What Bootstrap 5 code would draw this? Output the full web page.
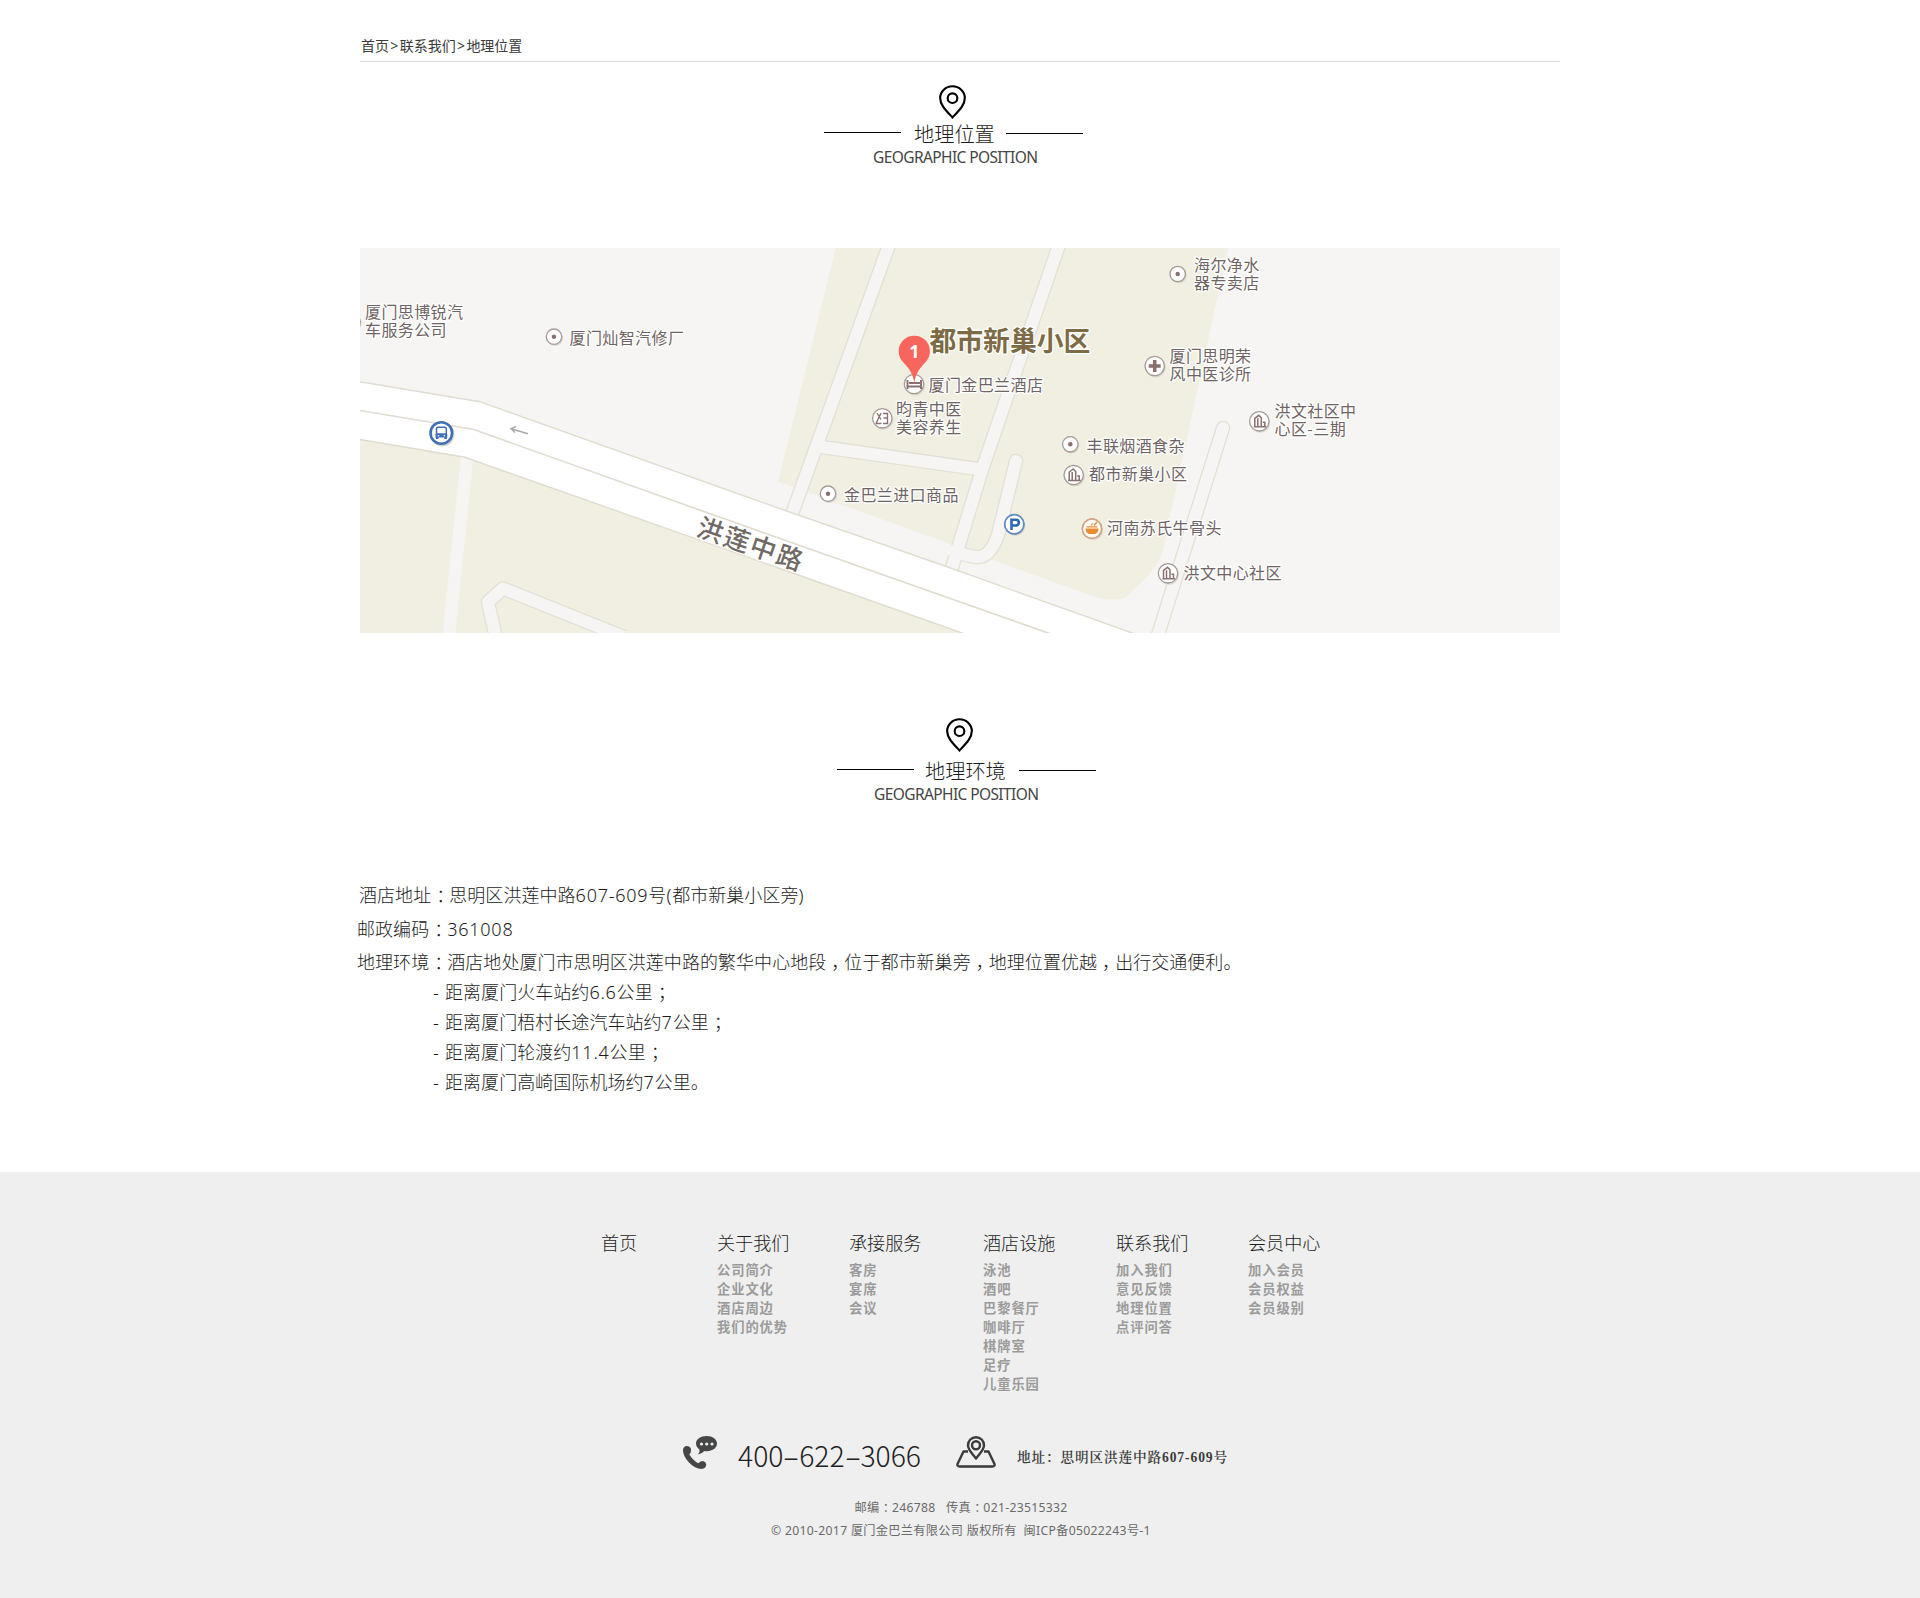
<!DOCTYPE html>
<html lang="zh-CN">
<head>
<meta charset="utf-8">
<meta name="viewport" content="width=device-width, initial-scale=1">
<title>地理位置</title>
<link href="https://cdn.jsdelivr.net/npm/bootstrap@5.3.0/dist/css/bootstrap.min.css" rel="stylesheet">
<style>
body{font-family:"Noto Sans","Noto Sans CJK SC",sans-serif;color:#3a3a3a;background:#fff;font-weight:400}
a{color:inherit;text-decoration:none}
.wrap{width:1200px;margin:0 auto}
.crumbs{height:62px;padding:36px 0 0 1px;font-size:14px;line-height:20px;border-bottom:1px solid #dcdadb}
.crumbs span{display:inline-block;width:10.7px;text-align:center}
.sec-title{width:260px;margin-left:464px}
.sec-title.env{margin-left:477px}
.sec-title .pin{display:block;width:27px;height:34px;margin-left:115px}
.sec-title.env .pin{margin-left:109px}
.sec-title .rule{width:77px;height:1px;background:#000;margin-top:9px}
.sec-title h2+.rule{margin-top:10px}
.sec-title h2{font-size:20.2px;line-height:24px;font-weight:300;color:#1c1c1c;margin:-1px 0 0;width:105px;padding-left:13px}
.sec-title.env h2{padding-left:11px}
.sec-title p{font-size:15.5px;line-height:20px;margin:0 0 0 49px;white-space:nowrap;letter-spacing:-.6px;color:#444}
.sec-title.env p{margin-left:37px}
.map{display:block;margin-top:81px}
.info{font-size:18px;font-weight:300;color:#1c1c1c;letter-spacing:.05px;padding-top:75px}
.info p{margin:0 0 0 -3px;line-height:33.5px;white-space:nowrap}
.info p:first-child{margin-left:-1px}
.info ul{padding-left:73px;margin-top:-3px}
.info li{line-height:30px}
.info .lt{letter-spacing:.75px}
.pu{font-family:"Noto Sans CJK SC";font-feature-settings:"halt";padding:0 .22em 0 .28em;line-height:1}
footer{background:#efefef;height:426px;margin-top:75.5px}
.cols{display:grid;grid-template-columns:116px 132px 134px 133px 132px 100px;margin-left:241px;height:205px;padding-top:58px}
.cols h3{font-size:18.1px;line-height:27px;font-weight:300;color:#1c1c1c;margin:0 0 4px;white-space:nowrap}
.cols li{font-size:13.3px;letter-spacing:.9px;line-height:19px;font-weight:600;color:#9b9b9b;white-space:nowrap}
.contact{height:61px;margin-left:323px;margin-top:58px;color:#3b3b3b}
.tel{font:300 28.3px/36px "Noto Sans CJK SC",sans-serif;margin:2px 0 0 21px;width:218px;white-space:nowrap;color:#222}
.tel i{font-style:normal;display:inline-block;width:15.8px;text-align:center;transform:scaleX(1.8)}
.addr{font:600 13.6px/20px "Liberation Serif","Noto Serif CJK SC","Noto Sans CJK SC",serif;letter-spacing:.9px;margin:13px 0 0 21px;white-space:nowrap}
.legal{font-size:12.2px;letter-spacing:.3px;line-height:23px;color:#6a6a6a;white-space:pre;padding-left:2px}
</style>
<script src="https://cdn.jsdelivr.net/npm/bootstrap@5.3.0/dist/js/bootstrap.bundle.min.js"></script>
</head>
<body>
<svg width="0" height="0" class="position-absolute" aria-hidden="true">
<defs>
<symbol id="pin" viewBox="0 0 28 35"><path d="M14 1.2C7 1.200 1.200 6.700 1.200 13.400C1.200 20.500 7 26 14 33.500C21 26 26.800 20.500 26.800 13.400C26.800 6.700 21 1.200 14 1.200Z" fill="none" stroke="#000" stroke-width="2.200"/><circle cx="14" cy="13.500" r="5" fill="none" stroke="#000" stroke-width="2.200"/></symbol>
<g id="disc"><circle cx="1" cy="1.500" r="10" fill="#c9c5bb" opacity=".6"/><circle r="9.700" fill="#fff" stroke="#a59a98" stroke-width="1.300"/></g>
<g id="dot"><circle cx="1" cy="1.300" r="8" fill="#c9c5bb" opacity=".6"/><circle r="7.700" fill="#fff" stroke="#a59a98" stroke-width="1.300"/><circle r="2.200" fill="#8a6f6f"/></g>
<g id="bld"><use href="#disc"/><path d="M-5.500 5.500H7M-4.500 5V-3L-.5-6L2 -3.500V5M-1.500 5V-3M5.500 5V1H3.500" fill="none" stroke="#8a706f" stroke-width="1.500"/></g>
</defs>
</svg>

<main class="wrap">
  <nav class="crumbs"><a href="#">首页</a><span>&gt;</span><a href="#">联系我们</a><span>&gt;</span><a href="#">地理位置</a></nav>

  <section style="padding-top:23px">
    <div class="sec-title">
      <svg class="pin"><use href="#pin"/></svg>
      <div class="d-flex align-items-start mt-1" style="height:20px"><div class="rule"></div><h2>地理位置</h2><div class="rule"></div></div>
      <p class="pt-1">GEOGRAPHIC POSITION</p>
    </div>

    <svg class="map" width="1200" height="385" viewBox="0 0 1200 385" role="img">
      <rect width="1200" height="385" fill="#f6f5f3"/>
      <path d="M475.700 0L418 233.500L450 245.300L590 296L637 313.700L738 350Q755 353 765 350L787 329Q800 315 803 302L868 0ZM0 191L105 209.300L410 317L602 385H0Z" fill="#f1efe2"/>
      <path d="M101 208L113 212L95.300 385H82.700Z" fill="#f6f5f3"/>
      <g fill="none" stroke-linejoin="round">
        <g stroke="#e2e0d4" stroke-width="14.500">
          <path d="M529 -3L432 266"/><path d="M462 199L619 221"/><path d="M699 -3L622 222L590 326"/><path d="M656 213L638 287Q630 309 618 309Q610 309 597 304" stroke-linecap="round"/><path d="M863 180L797 390" stroke-linecap="round"/><path d="M136 390L128 354L143 340.500L264 389"/>
        </g>
        <g stroke="#f6f5f3" stroke-width="12">
          <path d="M529 -3L432 266"/><path d="M458 198.500L621 221.500"/><path d="M699 -3L622 222L590 326"/><path d="M656 213L638 287Q630 309 618 309Q610 309 593 303" stroke-linecap="round"/><path d="M863 180L797 390" stroke-linecap="round"/><path d="M136 390L128 354L143 340.500L264 389"/>
        </g>
      </g>
      <path d="M-3 133.300L120 153.700L410 257.200L585 318L775 386H605L410 317L105 209.300L-3 191Z" fill="#fff" stroke="#dfdccf" stroke-width="1.400"/>
      <path d="M-3 162L113 181.300L410 287L691 386" fill="none" stroke="#dfdccf" stroke-width="1.600"/>
      <path d="M168 185.700L151 180.800M156 178.500L151 180.800L155 184.500" fill="none" stroke="#aaa" stroke-width="1.500"/>

      <use href="#dot" x="-7.500" y="74"/><use href="#dot" x="194" y="88.700"/><use href="#dot" x="817.700" y="26"/><use href="#dot" x="710.300" y="196.300"/><use href="#dot" x="468" y="245.700"/>
      <use href="#bld" x="713.700" y="227"/><use href="#bld" x="808" y="325.300"/><use href="#bld" x="899.300" y="173.300"/>
      <use href="#disc" x="794.700" y="118"/><path d="M794.700 112v12M788.700 118h12" stroke="#8a706f" stroke-width="3.600"/>
      <use href="#disc" x="554" y="136"/><path d="M547.500 132v9M561 132v9M547.500 138.500h13.500M549 135h11" fill="none" stroke="#8a706f" stroke-width="1.900"/>
      <use href="#disc" x="522.300" y="170.300"/><path d="M517 165l4 6.500M521 165l-5 10.500M515.500 175.500h6M523 165.500h4.500v10h-4.500M523.500 170h4" fill="none" stroke="#8a706f" stroke-width="1.400"/>

      <circle cx="82.500" cy="186.500" r="12" fill="#c9c5bb" opacity=".7"/><circle cx="81.300" cy="185" r="10.800" fill="#fff" stroke="#3f70b6" stroke-width="2.600"/>
      <path d="M76.500 180.500q0-1.300 1.500-1.300h6.800q1.500 0 1.500 1.300v5.500h-9.800z" fill="#fff" stroke="#3f70b6" stroke-width="1.500"/><path d="M75.500 186h11.800v3.500H75.500zM76 189h2.500v2H76zM84.300 189h2.500v2h-2.500z" fill="#3f70b6"/><circle cx="78.500" cy="187.700" r=".8" fill="#fff"/><circle cx="84.300" cy="187.700" r=".8" fill="#fff"/>

      <use href="#disc" x="654.300" y="276.300"/><circle cx="654.300" cy="276.300" r="9.600" fill="#fff" stroke="#5c88c4" stroke-width="1.700"/>
      <path d="M651.500 282v-10.300h4.300q3 0 3 2.900t-3 2.900h-4" fill="none" stroke="#2e68b5" stroke-width="2.600"/>
      <use href="#disc" x="732" y="280.700"/><circle cx="732" cy="280.700" r="9.600" fill="#fff" stroke="#d9a27c" stroke-width="1.500"/>
      <path d="M725.500 280.500h13q0 4-3.500 5.500h-6q-3.500-1.500-3.500-5.500zM726.500 278.300h11v1.300h-11z" fill="#ec8a2e"/><path d="M731 277.500l2-2.500M734 277.500l3-3.500" stroke="#ec8a2e" stroke-width="1.200"/>

      <g font-family="Noto Sans CJK SC, sans-serif" font-size="16" font-weight="400" letter-spacing=".4" fill="#6f6463" stroke="#fff" stroke-width="2.500" stroke-linejoin="round" paint-order="stroke">
        <text x="5" y="70.300">厦门思博锐汽</text><text x="5" y="88.300">车服务公司</text>
        <text x="209.500" y="96">厦门灿智汽修厂</text>
        <text x="834" y="23">海尔净水</text><text x="834" y="41">器专卖店</text>
        <text x="809.500" y="114">厦门思明荣</text><text x="809.500" y="132">风中医诊所</text>
        <text x="914.500" y="169">洪文社区中</text><text x="914.500" y="187">心区-三期</text>
        <text x="568.500" y="142.500">厦门金巴兰酒店</text>
        <text x="536" y="166.500">昀青中医</text><text x="536" y="184.500">美容养生</text>
        <text x="726.500" y="203.500">丰联烟酒食杂</text><text x="729" y="232">都市新巢小区</text>
        <text x="484" y="253">金巴兰进口商品</text>
        <text x="747" y="286">河南苏氏牛骨头</text><text x="823.500" y="331">洪文中心社区</text>
        <text x="569.500" y="103" font-size="26.800" letter-spacing="0" font-weight="700" fill="#7d6b45">都市新巢小区</text>
        <text transform="translate(390 296) rotate(19)" x="1" y="9.500" text-anchor="middle" font-size="26" letter-spacing="2" font-weight="500" fill="#706964">洪莲中路</text>
      </g>
      <path d="M554.300 136C553.500 125 548 119.500 543 114A15.600 15.600 0 1 1 565.600 114C560.600 119.500 555.100 125 554.300 136Z" fill="#f7655d"/>
      <text x="554.300" y="109.500" text-anchor="middle" font-family="Noto Sans" font-size="18" font-weight="700" fill="#fff">1</text>
    </svg>
  </section>

  <section style="padding-top:85px">
    <div class="sec-title env">
      <svg class="pin"><use href="#pin"/></svg>
      <div class="d-flex align-items-start mt-2" style="height:20px"><div class="rule"></div><h2>地理环境</h2><div class="rule"></div></div>
      <p class="pt-1">GEOGRAPHIC POSITION</p>
    </div>
    <div class="info">
      <p>酒店地址<span class="pu">：</span>思明区洪莲中路<span class="lt">607-609</span>号<span class="lt">(</span>都市新巢小区旁)</p>
      <p>邮政编码<span class="pu">：</span><span class="lt">361008</span></p>
      <p>地理环境<span class="pu">：</span>酒店地处厦门市思明区洪莲中路的繁华中心地段<span class="pu">，</span>位于都市新巢旁<span class="pu">，</span>地理位置优越<span class="pu">，</span>出行交通便利。</p>
      <ul class="list-unstyled mb-0">
        <li><span class="lt">- </span>距离厦门火车站约<span class="lt">6.6</span>公里<span class="pu">；</span></li>
        <li><span class="lt">- </span>距离厦门梧村长途汽车站约<span class="lt">7</span>公里<span class="pu">；</span></li>
        <li><span class="lt">- </span>距离厦门轮渡约<span class="lt">11.4</span>公里<span class="pu">；</span></li>
        <li><span class="lt">- </span>距离厦门高崎国际机场约<span class="lt">7</span>公里。</li>
      </ul>
    </div>
  </section>
</main>

<footer>
  <div class="wrap">
    <div class="cols">
      <div><h3>首页</h3></div>
      <div><h3>关于我们</h3><ul class="list-unstyled m-0"><li>公司简介</li><li>企业文化</li><li>酒店周边</li><li>我们的优势</li></ul></div>
      <div><h3>承接服务</h3><ul class="list-unstyled m-0"><li>客房</li><li>宴席</li><li>会议</li></ul></div>
      <div><h3>酒店设施</h3><ul class="list-unstyled m-0"><li>泳池</li><li>酒吧</li><li>巴黎餐厅</li><li>咖啡厅</li><li>棋牌室</li><li>足疗</li><li>儿童乐园</li></ul></div>
      <div><h3>联系我们</h3><ul class="list-unstyled m-0"><li>加入我们</li><li>意见反馈</li><li>地理位置</li><li>点评问答</li></ul></div>
      <div><h3>会员中心</h3><ul class="list-unstyled m-0"><li>加入会员</li><li>会员权益</li><li>会员级别</li></ul></div>
    </div>
    <div class="contact d-flex align-items-start">
      <svg width="34" height="34" viewBox="0 0 34 34" fill="#454747"><path d="M23.700 1C17.500 1 13 4.300 13 8.500C13 11 14.300 13 16.500 14.400Q17 17 15 19.500Q19 18.700 21.300 16Q22.500 16.200 23.700 16.200C29.700 16.200 34 12.800 34 8.600S29.700 1 23.700 1Z"/><g fill="#efefef"><circle cx="18.500" cy="9" r="1.600"/><circle cx="23.700" cy="9" r="1.600"/><circle cx="29" cy="9" r="1.600"/></g><path d="M0 15.500C0 12.500 1.500 11 4 11Q8.500 11.500 8 15.500Q8 18 6.300 19.200Q9.500 25 15.300 28.300Q17.500 26 20 26Q23 26.800 23.300 29.500Q23 33.500 18.500 34Q12 34 5.500 27Q0 20.500 0 15.500Z"/></svg>
      <div class="tel">400<i>-</i>622<i>-</i>3066</div>
      <svg style="margin-top:1px" width="40" height="32" viewBox="0 0 40 32" fill="none" stroke="#3b3b3b" stroke-width="2.400" stroke-linejoin="round"><path d="M12 15.500H7.500L1.500 28Q1 30.500 3.500 30.500H36.500Q39 30.500 38.500 28L32.500 15.500H28"/><path d="M20 1.200C15.500 1.200 12 4.700 12 9.200C12 14 16 17 20 22.500C24 17 28 14 28 9.200C28 4.700 24.500 1.200 20 1.200Z"/><circle cx="20" cy="9.300" r="4"/></svg>
      <div class="addr">地址：思明区洪莲中路607-609号</div>
    </div>
    <div class="legal text-center">邮编<span class="pu">：</span>246788   传真<span class="pu">：</span>021-23515332</div>
    <div class="legal text-center">© 2010-2017 厦门金巴兰有限公司 版权所有  闽ICP备05022243号-1</div>
  </div>
</footer>
</body>
</html>
